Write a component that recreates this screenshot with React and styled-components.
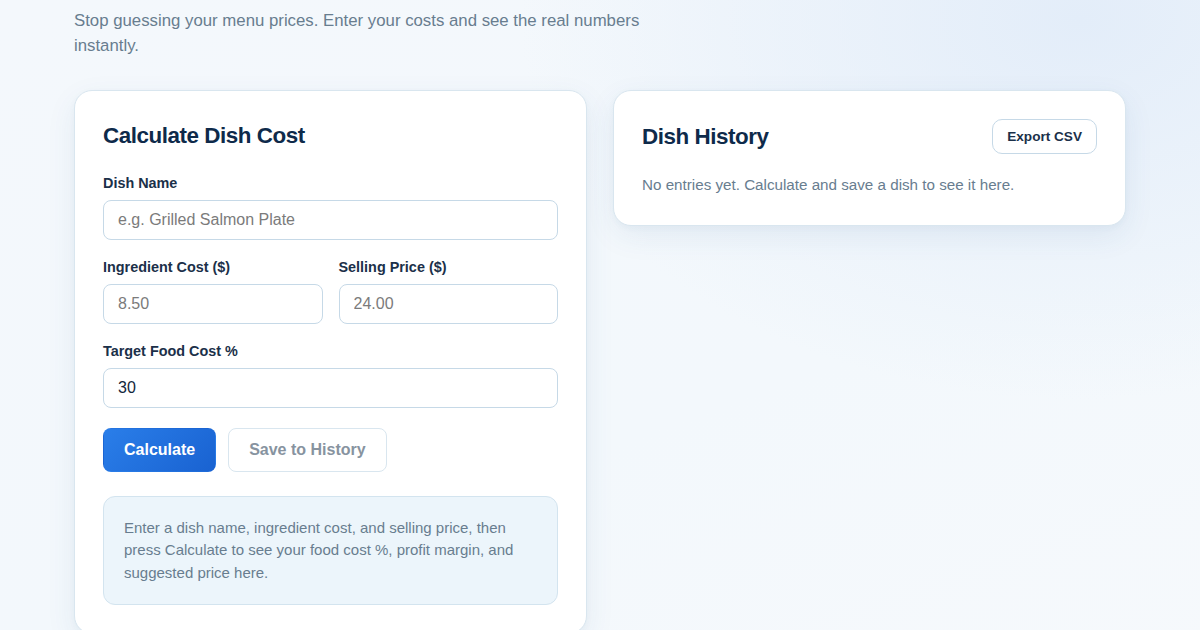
import styled, { createGlobalStyle } from "styled-components";

const GlobalStyle = createGlobalStyle`
  * { box-sizing: border-box; }
  html, body {
    margin: 0;
    padding: 0;
    font-family: "Liberation Sans", Arial, sans-serif;
  }
  body {
    min-height: 630px;
    background:
      radial-gradient(ellipse 560px 380px at 1080px 20px, #e3edf9 0%, rgba(227, 237, 249, 0) 100%),
      linear-gradient(160deg, #f4f8fc 0%, #f3f8fc 60%, #f6f9fc 100%);
  }
`;

const Page = styled.div`
  max-width: 1100px;
  margin: 0 auto;
  padding: 8px 24px 40px;
`;

const Intro = styled.p`
  margin: 0 0 32px;
  max-width: 580px;
  font-size: 16.8px;
  line-height: 25px;
  color: #687d8f;
`;

const Columns = styled.div`
  display: grid;
  grid-template-columns: 1fr 1fr;
  gap: 26px;
  align-items: start;
`;

const Card = styled.section`
  background: #ffffff;
  border: 1px solid #d9e6ef;
  border-radius: 18px;
  padding: 28px;
  box-shadow: 0 10px 30px rgba(40, 90, 140, 0.08), 0 2px 6px rgba(40, 90, 140, 0.04);
`;

const CardHeader = styled.div`
  display: flex;
  align-items: center;
  justify-content: space-between;
  min-height: ${(p) => (p.$compact ? 32 : 35)}px;
  margin: ${(p) => (p.$compact ? 1 : 0)}px 0 ${(p) => p.$gap || 19}px;
`;

const CardTitle = styled.h2`
  margin: 0;
  font-size: 22.4px;
  line-height: 32px;
  font-weight: 700;
  letter-spacing: -0.02em;
  color: #0e2a4a;
`;

const Field = styled.div`
  display: flex;
  flex-direction: column;
  gap: 8px;
  min-width: 0;
`;

const Label = styled.label`
  font-size: 14.4px;
  line-height: 18px;
  font-weight: 700;
  color: #1b3049;
`;

const Input = styled.input`
  width: 100%;
  height: 40px;
  padding: 0 14px;
  border: 1px solid #c6d9e7;
  border-radius: 8px;
  background: #fff;
  font-family: inherit;
  font-size: 16px;
  color: #12263c;
  outline: none;

  &::placeholder {
    color: #7b7b7b;
  }
`;

const Form = styled.div`
  display: flex;
  flex-direction: column;
  gap: 18px;
`;

const Row = styled.div`
  display: grid;
  grid-template-columns: 1fr 1fr;
  gap: 16px;
`;

const Actions = styled.div`
  display: flex;
  gap: 12px;
  margin-top: 20px;
`;

const Button = styled.button`
  height: 44px;
  padding: 0 20px;
  border-radius: 8px;
  font-family: inherit;
  font-size: 16px;
  font-weight: 700;
  cursor: pointer;
  border: 1px solid ${(p) => (p.$primary ? "transparent" : "#d9e6ef")};
  background: ${(p) =>
    p.$primary ? "linear-gradient(135deg, #2a7ee9 0%, #1962d1 100%)" : "#ffffff"};
  color: ${(p) => (p.$primary ? "#ffffff" : "#8793a0")};
`;

const SmallButton = styled.button`
  height: 35px;
  padding: 0 14px;
  border: 1px solid #c6d9e7;
  border-radius: 10px;
  background: #fff;
  font-family: inherit;
  font-size: 13.6px;
  font-weight: 700;
  color: #1b3049;
  cursor: pointer;
`;

const InfoBox = styled.div`
  margin-top: 24px;
  padding: 20px;
  background: #ecf5fb;
  border: 1px solid #d3e4ef;
  border-radius: 12px;
  font-size: 15px;
  line-height: 22.4px;
  color: #687d8f;
`;

const Empty = styled.p`
  margin: 0;
  font-size: 15.2px;
  line-height: 24px;
  color: #687d8f;
`;

export default function App() {
  return (
    <>
      <GlobalStyle />
      <Page>
        <Intro>
          Stop guessing your menu prices. Enter your costs and see the real numbers instantly.
        </Intro>
        <Columns>
          <Card>
            <CardHeader $compact $gap={22}>
              <CardTitle>Calculate Dish Cost</CardTitle>
            </CardHeader>
            <Form>
              <Field>
                <Label>Dish Name</Label>
                <Input placeholder="e.g. Grilled Salmon Plate" />
              </Field>
              <Row>
                <Field>
                  <Label>Ingredient Cost ($)</Label>
                  <Input placeholder="8.50" />
                </Field>
                <Field>
                  <Label>Selling Price ($)</Label>
                  <Input placeholder="24.00" />
                </Field>
              </Row>
              <Field>
                <Label>Target Food Cost %</Label>
                <Input defaultValue="30" />
              </Field>
            </Form>
            <Actions>
              <Button $primary>Calculate</Button>
              <Button>Save to History</Button>
            </Actions>
            <InfoBox>
              Enter a dish name, ingredient cost, and selling price, then press Calculate to see
              your food cost %, profit margin, and suggested price here.
            </InfoBox>
          </Card>
          <Card>
            <CardHeader>
              <CardTitle>Dish History</CardTitle>
              <SmallButton>Export CSV</SmallButton>
            </CardHeader>
            <Empty>No entries yet. Calculate and save a dish to see it here.</Empty>
          </Card>
        </Columns>
      </Page>
    </>
  );
}
